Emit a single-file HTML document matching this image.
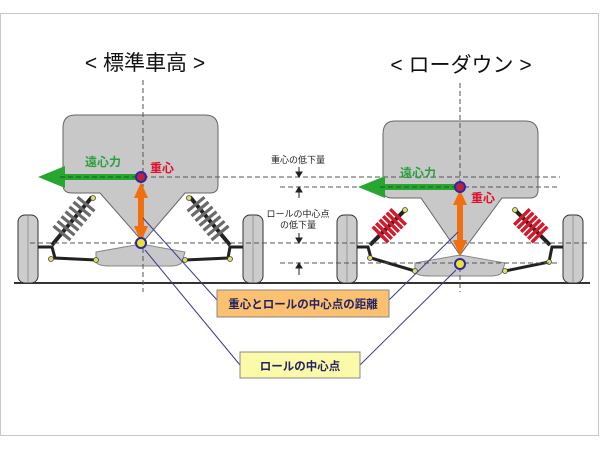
<!DOCTYPE html>
<html><head><meta charset="utf-8"><style>
html,body{margin:0;padding:0;background:#fff}
svg{display:block}
text{font-family:"Liberation Sans","Noto Sans CJK JP",sans-serif}
</style></head><body>
<svg width="600" height="450" viewBox="0 0 600 450" xmlns="http://www.w3.org/2000/svg">
<rect x="0" y="0" width="600" height="450" fill="#fff"/>
<rect x="0.5" y="13.5" width="598" height="422" fill="#fff" stroke="#c8c8c8"/>
<text x="145" y="70" font-size="21" text-anchor="middle" fill="#111">&lt; 標準車高 &gt;</text>
<text x="461" y="72" font-size="21" text-anchor="middle" fill="#111">&lt; ローダウン &gt;</text>

<line x1="14" y1="283" x2="590" y2="283" stroke="#333" stroke-width="2"/>

<!-- LEFT CAR -->
<g>
<path d="M75,115 H205 Q218,115 218,128 V185 Q218,193 210,193 H185 L143,242 L100,193 H72 Q63,193 63,185 V128 Q63,115 75,115 Z" fill="#c8c8c8" stroke="#666"/>
<path d="M96,252 L141,244 L185,252 L182,262 Q180,266 170,266 H110 Q98,266 96,262 Z" fill="#c8c8c8" stroke="#888"/>
<rect x="18" y="215" width="20" height="68" rx="7" fill="#ccc" stroke="#333"/>
<line x1="28" y1="216" x2="28" y2="282" stroke="#999"/>
<rect x="243" y="215" width="20" height="68" rx="7" fill="#ccc" stroke="#333"/>
<line x1="253" y1="216" x2="253" y2="282" stroke="#999"/>
<path d="M38,247 H52 L55,258 L96,260" stroke="#222" stroke-width="3" fill="none"/>
<path d="M243,247 H230 L228,258 L185,260" stroke="#222" stroke-width="3" fill="none"/>
<path d="M52,245 L92,197" stroke="#222" stroke-width="4"/>
<path d="M230,245 L190,197" stroke="#222" stroke-width="4"/>
<g stroke="#6a6a6a" stroke-width="3.2">
<line x1="53.5" y1="226" x2="70.5" y2="240"/><line x1="57.5" y1="221.2" x2="74.5" y2="235.2"/><line x1="61.5" y1="216.4" x2="78.5" y2="230.4"/><line x1="65.5" y1="211.6" x2="82.5" y2="225.6"/><line x1="69.5" y1="206.8" x2="86.5" y2="220.8"/><line x1="73.5" y1="202" x2="90.5" y2="216"/><line x1="77.5" y1="197.2" x2="94.5" y2="211.2"/>
<line x1="228.5" y1="226" x2="211.5" y2="240"/><line x1="224.5" y1="221.2" x2="207.5" y2="235.2"/><line x1="220.5" y1="216.4" x2="203.5" y2="230.4"/><line x1="216.5" y1="211.6" x2="199.5" y2="225.6"/><line x1="212.5" y1="206.8" x2="195.5" y2="220.8"/><line x1="208.5" y1="202" x2="191.5" y2="216"/><line x1="204.5" y1="197.2" x2="187.5" y2="211.2"/>
</g>
<g fill="#dede60" stroke="#444" stroke-width="0.8">
<circle cx="93" cy="198" r="2.5"/><circle cx="189" cy="198" r="2.5"/><circle cx="51" cy="259" r="2.5"/><circle cx="96" cy="260" r="2.5"/><circle cx="185" cy="260" r="2.5"/><circle cx="230" cy="259" r="2.5"/>
</g>
</g>

<!-- RIGHT CAR -->
<g>
<path d="M395,121 H525 Q538,121 538,134 V190 Q538,198 530,198 H502 L460,255 L421,198 H392 Q383,198 383,190 V134 Q383,121 395,121 Z" fill="#c8c8c8" stroke="#666"/>
<path d="M415,263 L460,255 L505,263 L502,272 Q500,276 490,276 H430 Q417,276 415,272 Z" fill="#c8c8c8" stroke="#888"/>
<rect x="337" y="215" width="20" height="68" rx="7" fill="#ccc" stroke="#333"/>
<line x1="347" y1="216" x2="347" y2="282" stroke="#999"/>
<rect x="563" y="215" width="20" height="68" rx="7" fill="#ccc" stroke="#333"/>
<line x1="573" y1="216" x2="573" y2="282" stroke="#999"/>
<path d="M357,247 H368 L371,258 L415,271" stroke="#222" stroke-width="3" fill="none"/>
<path d="M563,247 H552 L549,262 L505,271" stroke="#222" stroke-width="3" fill="none"/>
<path d="M370,245 L405,210" stroke="#222" stroke-width="4"/>
<path d="M550,245 L515,210" stroke="#222" stroke-width="4"/>
<g stroke="#d8182a" stroke-width="3.5">
<line x1="372.7" y1="226.7" x2="388.3" y2="242.3"/><line x1="376.2" y1="223.2" x2="391.8" y2="238.8"/><line x1="379.7" y1="219.7" x2="395.3" y2="235.3"/><line x1="383.2" y1="216.2" x2="398.8" y2="231.8"/><line x1="386.7" y1="212.7" x2="402.3" y2="228.3"/><line x1="390.2" y1="209.2" x2="405.8" y2="224.8"/>
<line x1="547.3" y1="226.7" x2="531.7" y2="242.3"/><line x1="543.8" y1="223.2" x2="528.2" y2="238.8"/><line x1="540.3" y1="219.7" x2="524.7" y2="235.3"/><line x1="536.8" y1="216.2" x2="521.2" y2="231.8"/><line x1="533.3" y1="212.7" x2="517.7" y2="228.3"/><line x1="529.8" y1="209.2" x2="514.2" y2="224.8"/>
</g>
<g fill="#dede60" stroke="#444" stroke-width="0.8">
<circle cx="405" cy="210" r="2.5"/><circle cx="515" cy="210" r="2.5"/><circle cx="370" cy="258" r="2.5"/><circle cx="415" cy="271" r="2.5"/><circle cx="505" cy="271" r="2.5"/><circle cx="549" cy="262" r="2.5"/>
</g>
</g>

<g stroke="#555" stroke-width="1" stroke-dasharray="5,3">
<line x1="143" y1="80" x2="143" y2="292"/>
<line x1="460" y1="83" x2="460" y2="292"/>
<line x1="55" y1="177" x2="560" y2="177"/>
<line x1="280" y1="187" x2="560" y2="187"/>
<line x1="30" y1="243" x2="590" y2="243"/>
<line x1="280" y1="263" x2="560" y2="263"/>
</g>
<g stroke="#222" stroke-width="1" fill="#222">
<line x1="299" y1="167" x2="299" y2="175"/><path d="M296,172 L299,177 L302,172Z"/>
<line x1="299" y1="189" x2="299" y2="198"/><path d="M296,192 L299,187 L302,192Z"/>
<line x1="299" y1="233" x2="299" y2="241"/><path d="M296,238 L299,243 L302,238Z"/>
<line x1="299" y1="265" x2="299" y2="275"/><path d="M296,268 L299,263 L302,268Z"/>
</g>
<text x="298" y="163" font-size="9" text-anchor="middle" fill="#222">重心の低下量</text>
<text x="298" y="217" font-size="9" text-anchor="middle" fill="#222">ロールの中心点</text>
<text x="298" y="228" font-size="9" text-anchor="middle" fill="#222">の低下量</text>

<path d="M140,174 H65 V166 L38,177 L65,188 V180 H140 Z" fill="#27a632"/>
<line x1="60" y1="177" x2="140" y2="177" stroke="#1a5a1a" stroke-dasharray="5,3"/>
<path d="M458,184 H385 V176 L358,187 L385,198 V190 H458 Z" fill="#27a632"/>
<line x1="380" y1="187" x2="458" y2="187" stroke="#1a5a1a" stroke-dasharray="5,3"/>
<text x="85" y="166" font-size="12" font-weight="bold" fill="#2aa040">遠心力</text>
<text x="400" y="177" font-size="12" font-weight="bold" fill="#2aa040">遠心力</text>
<text x="150" y="172" font-size="12" font-weight="bold" fill="#e0102a">重心</text>
<text x="471" y="202" font-size="12" font-weight="bold" fill="#e0102a">重心</text>

<path d="M141,182 L148,198 H144 V226 H148 L141,242 L134,226 H138 V198 H134 Z" fill="#f07010"/>
<path d="M460,190 L467,205 H463 V240 H467 L460,256 L453,240 H457 V205 H453 Z" fill="#f07010"/>
<circle cx="141" cy="177" r="5" fill="#c02040" stroke="#2a2aa0" stroke-width="2"/>
<circle cx="460" cy="187" r="5" fill="#c02040" stroke="#2a2aa0" stroke-width="2"/>
<circle cx="141" cy="243" r="5" fill="#f0e030" stroke="#2a2aa0" stroke-width="2"/>
<circle cx="460" cy="264" r="5" fill="#f0e030" stroke="#2a2aa0" stroke-width="2"/>

<g stroke="#3a3a90" stroke-width="1" fill="none">
<line x1="217" y1="300" x2="143" y2="218"/>
<line x1="389" y1="300" x2="458" y2="232"/>
<line x1="240" y1="365" x2="145" y2="250"/>
<line x1="360" y1="365" x2="456" y2="270"/>
</g>
<rect x="217" y="290" width="172" height="27" fill="#fbc070" stroke="#888"/>
<text x="303" y="308" font-size="11.5" font-weight="bold" text-anchor="middle" fill="#222266">重心とロールの中心点の距離</text>
<rect x="240" y="352" width="120" height="26" fill="#fafaa8" stroke="#888"/>
<text x="300" y="370" font-size="11.5" font-weight="bold" text-anchor="middle" fill="#222266">ロールの中心点</text>
</svg>
</body></html>
